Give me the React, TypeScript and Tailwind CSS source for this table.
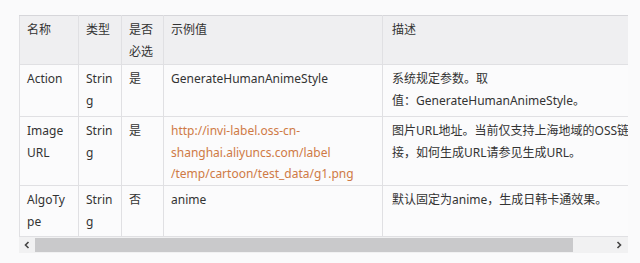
import React from 'react';

const rows = [
    {
        name: 'Action',
        type: 'String',
        required: '是',
        example: ['GenerateHumanAnimeStyle'],
        link: false,
        desc: ['系统规定参数。取', '值：GenerateHumanAnimeStyle。'],
        h: 'h-[52px]',
    },
    {
        name: 'Image URL',
        type: 'String',
        required: '是',
        example: ['http://invi-label.oss-cn-', 'shanghai.aliyuncs.com/label', '/temp/cartoon/test_data/g1.png'],
        link: true,
        desc: ['图片URL地址。当前仅支持上海地域的OSS链', '接，如何生成URL请参见生成URL。'],
        h: 'h-[69px]',
    },
    {
        name: 'AlgoType',
        type: 'String',
        required: '否',
        example: ['anime'],
        link: false,
        desc: ['默认固定为anime，生成日韩卡通效果。'],
        h: 'h-[51px]',
    },
];

const cell = 'border border-[#e0e0e3] align-top pl-[7px] pr-[8px] pt-[3px] break-all';

export default function App() {
    return (
        <div
            className="w-[640px] h-[263px] bg-[#fafafb] pt-[15px] pl-[19px] text-[12px] leading-[21.5px] text-[#333]"
            style={{ fontFamily: '"Noto Sans", "Noto Sans CJK SC", sans-serif' }}
        >
            <div className="w-[609px]">
                <div className="overflow-hidden">
                    <table className="table-fixed border-collapse w-[690px]">
                        <colgroup>
                            <col className="w-[59px]" />
                            <col className="w-[43px]" />
                            <col className="w-[42px]" />
                            <col className="w-[219px]" />
                            <col className="w-[327px]" />
                        </colgroup>
                        <thead>
                            <tr className="h-[49px] bg-[#efeff1] text-left">
                                <th className={`${cell} font-normal border-t-[#d6d6da]`}>名称</th>
                                <th className={`${cell} font-normal border-t-[#d6d6da]`}>类型</th>
                                <th className={`${cell} font-normal border-t-[#d6d6da]`}>是否必选</th>
                                <th className={`${cell} font-normal border-t-[#d6d6da]`}>示例值</th>
                                <th className={`${cell} font-normal border-t-[#d6d6da] pl-[9px]`}>描述</th>
                            </tr>
                        </thead>
                        <tbody>
                            {rows.map((r) => (
                                <tr key={r.name} className={`${r.h} bg-[#fbfbfc]`}>
                                    <td className={`${cell} ${r.name === 'Image URL' ? 'break-normal' : ''}`}>{r.name}</td>
                                    <td className={cell}>{r.type}</td>
                                    <td className={cell}>{r.required}</td>
                                    <td className={`${cell} ${r.link ? 'text-[#cf7a45]' : ''}`}>
                                        {r.example.map((l) => (
                                            <div key={l} className="whitespace-nowrap">
                                                {l}
                                            </div>
                                        ))}
                                    </td>
                                    <td className={`${cell} pl-[9px]`}>
                                        {r.desc.map((l) => (
                                            <div key={l} className="whitespace-nowrap">
                                                {l}
                                            </div>
                                        ))}
                                    </td>
                                </tr>
                            ))}
                        </tbody>
                    </table>
                </div>

                {/* horizontal scrollbar */}
                <div className="flex h-[16px] bg-[#f1f1f2] items-stretch">
                    <div className="w-[16px] flex items-center justify-center">
                        <svg width="8" height="8" viewBox="0 0 8 8">
                            <polyline points="5.5,1 2.5,4 5.5,7" fill="none" stroke="#444" strokeWidth="1.6" />
                        </svg>
                    </div>
                    <div className="w-[538px] bg-[#c9c9cb] my-[1px]" />
                    <div className="flex-1" />
                    <div className="w-[18px] flex items-center justify-center">
                        <svg width="8" height="8" viewBox="0 0 8 8">
                            <polyline points="2.5,1 5.5,4 2.5,7" fill="none" stroke="#444" strokeWidth="1.6" />
                        </svg>
                    </div>
                </div>
            </div>
        </div>
    );
}
